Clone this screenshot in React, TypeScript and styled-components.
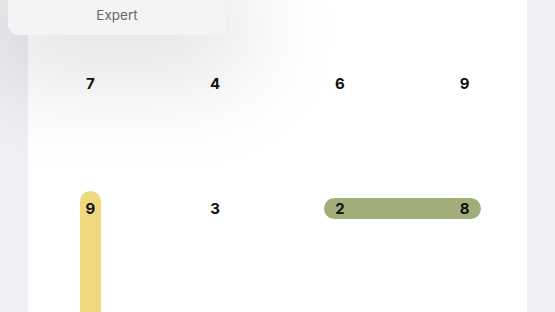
import React from 'react';
import styled, { createGlobalStyle } from 'styled-components';

const GlobalStyle = createGlobalStyle`
  html, body {
    margin: 0;
    padding: 0;
    background: #efeff4;
    font-family: Inter, "Liberation Sans", Arial, sans-serif;
    overflow: hidden;
  }
`;

const CELL = 124.75;
const TOP = 21;

const Page = styled.div`
  position: relative;
  height: 312px;
  padding: 0 28px;
  display: flex;
`;

const Panel = styled.main`
  flex: 1;
  background: #ffffff;
  padding-top: ${TOP}px;
  overflow: hidden;
`;

const Board = styled.div`
  position: relative;
  display: grid;
  grid-template-columns: repeat(4, 1fr);
  grid-auto-rows: ${CELL}px;
`;

const Cell = styled.div`
  position: relative;
  z-index: 1;
  display: flex;
  align-items: center;
  justify-content: center;
  font-size: 15px;
  font-weight: 700;
  color: #111111;
`;

const Bar = styled.div<{ $tone: 'green' | 'yellow' }>`
  position: absolute;
  border-radius: 11px;
  background: ${p => (p.$tone === 'green' ? '#a2ae79' : '#f0d87f')};
`;

const Menu = styled.div`
  position: absolute;
  left: 8px;
  top: -20px;
  width: 218px;
  height: 55px;
  display: flex;
  flex-direction: column;
  justify-content: flex-end;
  background: #f4f4f4;
  border-radius: 11px;
  box-shadow: 0 20px 100px 24px rgba(0, 0, 0, 0.12);
  z-index: 5;
`;

const MenuItem = styled.div`
  height: 30px;
  display: flex;
  align-items: center;
  justify-content: center;
  padding-bottom: 10px;
  box-sizing: border-box;
  font-size: 13.5px;
  color: #67676b;
`;

const values: (number | null)[][] = [
  [7, 4, 6, 9],
  [9, 3, 2, 8],
  [null, null, null, null],
];

type Seg = { tone: 'green' | 'yellow'; r1: number; c1: number; r2: number; c2: number };

const segments: Seg[] = [
  { tone: 'green', r1: 1, c1: 2, r2: 1, c2: 3 },
  { tone: 'yellow', r1: 1, c1: 0, r2: 3, c2: 0 },
];

const PAD = 16;
const W = 21;

export default function App() {
  return (
    <>
      <GlobalStyle />
      <Page>
        <Menu>
          <MenuItem>Expert</MenuItem>
        </Menu>
        <Panel>
          <Board>
            {segments.map((s, i) => {
              const x1 = s.c1 * CELL + CELL / 2;
              const x2 = s.c2 * CELL + CELL / 2;
              const y1 = s.r1 * CELL + CELL / 2;
              const y2 = s.r2 * CELL + CELL / 2;
              const horizontal = s.r1 === s.r2;
              const style = horizontal
                ? { left: x1 - PAD, width: x2 - x1 + PAD * 2, top: y1 - W / 2, height: W }
                : { left: x1 - W / 2, width: W, top: y1 - PAD - 1, height: y2 - y1 + PAD * 2 };
              return <Bar key={i} $tone={s.tone} style={style} />;
            })}
            {values.flat().map((v, i) => (
              <Cell key={i}>{v}</Cell>
            ))}
          </Board>
        </Panel>
      </Page>
    </>
  );
}
